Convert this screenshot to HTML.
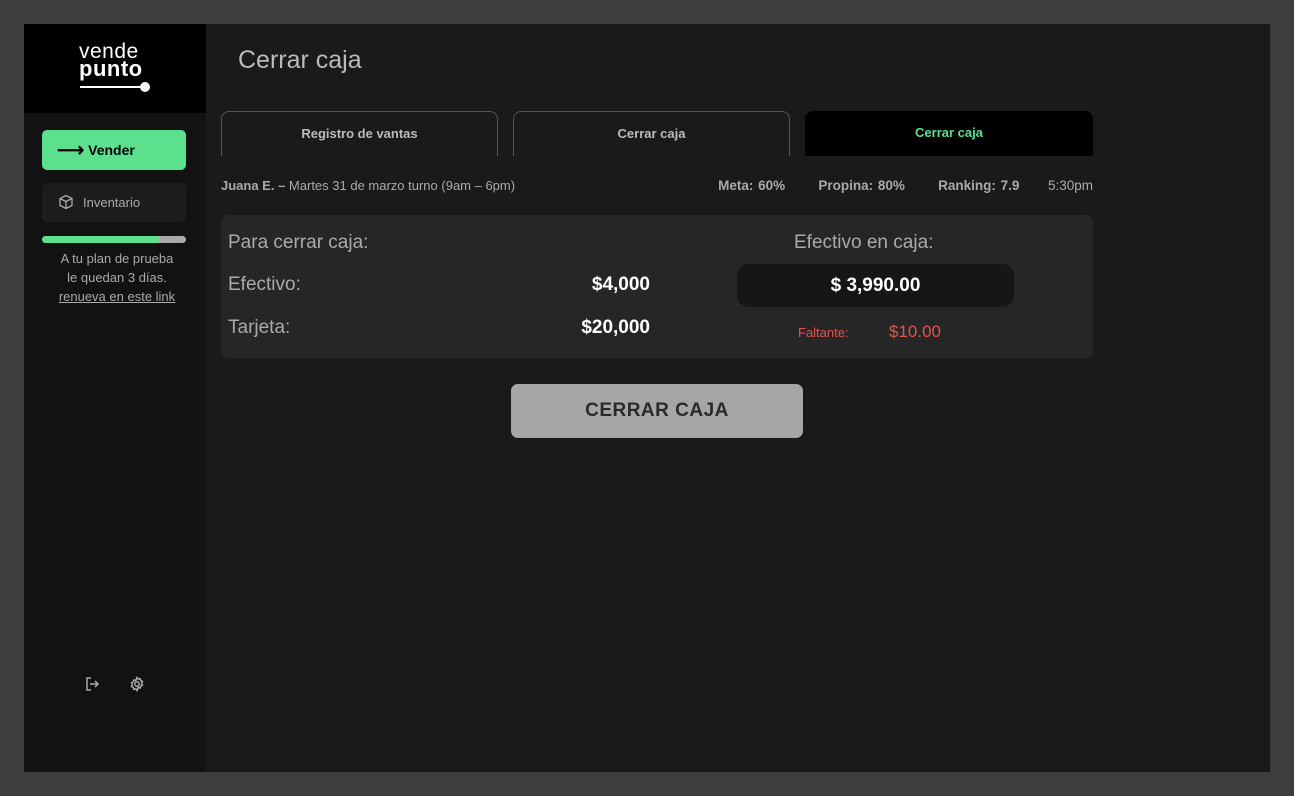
<!DOCTYPE html>
<html><head><meta charset="utf-8"><style>
*{box-sizing:border-box;margin:0;padding:0}
body{width:1294px;height:796px;background:#3d3d3d;font-family:"Liberation Sans",sans-serif;position:relative;overflow:hidden}
.app{position:absolute;left:24px;top:24px;width:1246px;height:748px;background:#1a1a1a}
.side{position:absolute;left:0;top:0;width:182px;height:748px;background:#121212}
.logo{position:absolute;left:0;top:0;width:182px;height:89px;background:#000;color:#fff;text-align:center}
.abs{position:absolute}
.tab{position:absolute;top:87px;height:45px;border:1px solid #555;border-bottom:none;border-radius:8px 8px 0 0;color:#bbb;font-size:13px;font-weight:bold;text-align:center;line-height:44px}
.t{position:absolute;color:#aaa;font-size:19px}
.v{position:absolute;color:#fff;font-size:19px;font-weight:bold}
</style></head><body>
<div class="app">
<div class="side">
 <div class="logo">
  <div class="abs" style="left:55px;top:18px;font-size:21px;line-height:20px;letter-spacing:0.5px">vende</div>
  <div class="abs" style="left:55px;top:35px;font-size:22px;font-weight:bold;line-height:20px;letter-spacing:0.5px">punto</div>
  <div class="abs" style="left:56px;top:62px;width:64px;height:2px;background:#fff"></div>
  <div class="abs" style="left:116px;top:58px;width:10px;height:10px;border-radius:50%;background:#fff"></div>
 </div>
 <div class="abs" style="left:18px;top:106px;width:144px;height:40px;background:#5ce08e;border-radius:5px;font-size:14px;font-weight:bold;color:#000;line-height:40px;padding-left:15px"><span style="font-size:19px;vertical-align:-1px">⟶</span>&nbsp;Vender</div>
 <div class="abs" style="left:18px;top:159px;width:144px;height:39px;background:#1c1c1c;border-radius:5px;font-size:13px;color:#aaa;line-height:39px;padding-left:16px">
  <svg width="16" height="16" viewBox="0 0 16 16" style="vertical-align:-3px;margin-right:9px" fill="none" stroke="#aaa" stroke-width="1.3"><path d="M8 1.5 14 4.5v7L8 14.5 2 11.5v-7z M2 4.5 8 7.5 14 4.5 M8 7.5v7"/></svg>Inventario</div>
 <div class="abs" style="left:18px;top:212px;width:144px;height:7px;background:#aaa;border-radius:4px"><div style="width:118px;height:7px;background:#5ce08e;border-radius:4px"></div></div>
 <div class="abs" style="left:2px;top:225px;width:182px;text-align:center;color:#aaa;font-size:13px;line-height:19px">A tu plan de prueba<br>le quedan 3 días.<br><u>renueva en este link</u></div>
 <svg class="abs" style="left:60px;top:652px" width="16" height="16" viewBox="0 0 16 16" fill="none" stroke="#aaa" stroke-width="1.5"><path d="M7 2H3v12h4 M6 8h8 M11 5l3 3-3 3"/></svg>
 <svg class="abs" style="left:105px;top:652px" width="16" height="16" viewBox="0 0 16 16" fill="none" stroke="#aaa" stroke-width="1.5"><circle cx="8" cy="8" r="2.2"/><path d="M8 1.5l1.2 1.6 2-.5.5 2 1.8.9-.9 1.8.9 1.8-1.8.9-.5 2-2-.5L8 14.5l-1.2-1.6-2 .5-.5-2-1.8-.9.9-1.8-.9-1.8 1.8-.9.5-2 2 .5z"/></svg>
</div>
<div class="abs" style="left:214px;top:22px;color:#bbb;font-size:25px">Cerrar caja</div>
<div class="tab" style="left:197px;width:277px">Registro de vantas</div>
<div class="tab" style="left:489px;width:277px">Cerrar caja</div>
<div class="tab" style="left:781px;width:288px;background:#000;border:none;color:#5ce08e;line-height:44px">Cerrar caja</div>
<div class="abs" style="left:197px;top:154px;color:#aaa;font-size:13px"><b>Juana E. –</b> Martes 31 de marzo turno (9am – 6pm)</div>
<div class="abs" style="right:177px;top:154px;color:#aaa;font-size:13.5px;word-spacing:1px"><b>Meta: 60%</b>&nbsp;&nbsp;&nbsp;&nbsp;&nbsp;&nbsp;&nbsp;<b>Propina: 80%</b>&nbsp;&nbsp;&nbsp;&nbsp;&nbsp;&nbsp;&nbsp;<b>Ranking: 7.9</b>&nbsp;&nbsp;&nbsp;&nbsp;&nbsp;&nbsp;5:30pm</div>
<div class="abs" style="left:197px;top:191px;width:872px;height:143px;background:#262626;border-radius:7px">
 <div class="t" style="left:7px;top:17px">Para cerrar caja:</div>
 <div class="t" style="left:7px;top:59px">Efectivo:</div>
 <div class="t" style="left:7px;top:102px">Tarjeta:</div>
 <div class="v" style="right:443px;top:59px">$4,000</div>
 <div class="v" style="right:443px;top:102px">$20,000</div>
 <div class="t" style="left:573px;top:17px">Efectivo en caja:</div>
 <div class="abs" style="left:516px;top:49px;width:277px;height:43px;background:#161616;border-radius:12px;color:#fff;font-size:19px;font-weight:bold;text-align:center;line-height:43px">$ 3,990.00</div>
 <div class="abs" style="left:577px;top:110px;color:#e0554a;font-size:13px">Faltante:</div>
 <div class="abs" style="left:668px;top:107px;color:#e0554a;font-size:17px">$10.00</div>
</div>
<div class="abs" style="left:487px;top:360px;width:292px;height:54px;background:#a6a6a6;border-radius:7px;color:#2a2a2a;font-size:19px;font-weight:bold;text-align:center;line-height:54px;letter-spacing:0.5px">CERRAR CAJA</div>
</div>
</body></html>
